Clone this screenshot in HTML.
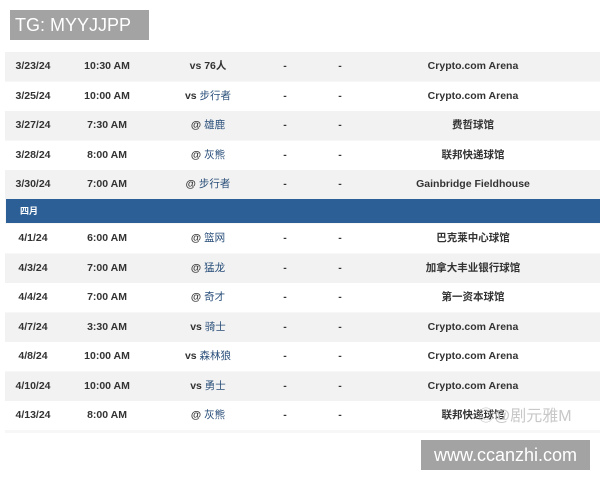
<!DOCTYPE html>
<html><head><meta charset="utf-8"><style>
body{margin:0;width:600px;height:480px;background:#fff;position:relative;overflow:hidden;font-family:"Liberation Sans","Noto Sans CJK SC",sans-serif;}
.tb{position:absolute;left:5px;top:52px;width:595px;height:381px;background:#f7f7f7;}
.wrap{position:absolute;left:0;top:1.5px;width:600px;height:480px}
.r{position:absolute;left:5px;width:595px;height:29.6px;font-size:10.5px;font-weight:bold;color:#333;}
.r span{position:absolute;top:0;line-height:29.6px;transform:translateX(-50%);white-space:nowrap}
.g{background:#f2f2f2}.w{background:#fff}
.o{color:#2a4f7a;font-weight:normal}
.mon{position:absolute;left:6px;top:197px;width:594px;height:24px;background:#2b5f96;color:#fff;font-size:9px;font-weight:bold;line-height:24px;padding-left:14px;box-sizing:border-box}
.lab{position:absolute;background:#a3a3a3;color:#fff;font-size:18px;}
</style></head><body>
<div class="lab" style="left:10px;top:10px;width:139px;height:30px;line-height:30px;padding-left:5px;box-sizing:border-box">TG: MYYJJPP</div>
<div class="tb"></div>
<div class="wrap">
<div class="r g" style="top:50px"><span style="left:28px">3/23/24</span><span style="left:102px">10:30 AM</span><span style="left:203px">vs 76人</span><span style="left:280px">-</span><span style="left:335px">-</span><span style="left:468px">Crypto.com Arena</span></div>
<div class="r w" style="top:80px"><span style="left:28px">3/25/24</span><span style="left:102px">10:00 AM</span><span style="left:203px">vs <b class="o">步行者</b></span><span style="left:280px">-</span><span style="left:335px">-</span><span style="left:468px">Crypto.com Arena</span></div>
<div class="r g" style="top:109px"><span style="left:28px">3/27/24</span><span style="left:102px">7:30 AM</span><span style="left:203px">@ <b class="o">雄鹿</b></span><span style="left:280px">-</span><span style="left:335px">-</span><span style="left:468px">费哲球馆</span></div>
<div class="r w" style="top:139px"><span style="left:28px">3/28/24</span><span style="left:102px">8:00 AM</span><span style="left:203px">@ <b class="o">灰熊</b></span><span style="left:280px">-</span><span style="left:335px">-</span><span style="left:468px">联邦快递球馆</span></div>
<div class="r g" style="top:168px"><span style="left:28px">3/30/24</span><span style="left:102px">7:00 AM</span><span style="left:203px">@ <b class="o">步行者</b></span><span style="left:280px">-</span><span style="left:335px">-</span><span style="left:468px">Gainbridge Fieldhouse</span></div>
<div class="mon">四月</div>
<div class="r w" style="top:222px"><span style="left:28px">4/1/24</span><span style="left:102px">6:00 AM</span><span style="left:203px">@ <b class="o">篮网</b></span><span style="left:280px">-</span><span style="left:335px">-</span><span style="left:468px">巴克莱中心球馆</span></div>
<div class="r g" style="top:252px"><span style="left:28px">4/3/24</span><span style="left:102px">7:00 AM</span><span style="left:203px">@ <b class="o">猛龙</b></span><span style="left:280px">-</span><span style="left:335px">-</span><span style="left:468px">加拿大丰业银行球馆</span></div>
<div class="r w" style="top:281px"><span style="left:28px">4/4/24</span><span style="left:102px">7:00 AM</span><span style="left:203px">@ <b class="o">奇才</b></span><span style="left:280px">-</span><span style="left:335px">-</span><span style="left:468px">第一资本球馆</span></div>
<div class="r g" style="top:311px"><span style="left:28px">4/7/24</span><span style="left:102px">3:30 AM</span><span style="left:203px">vs <b class="o">骑士</b></span><span style="left:280px">-</span><span style="left:335px">-</span><span style="left:468px">Crypto.com Arena</span></div>
<div class="r w" style="top:340px"><span style="left:28px">4/8/24</span><span style="left:102px">10:00 AM</span><span style="left:203px">vs <b class="o">森林狼</b></span><span style="left:280px">-</span><span style="left:335px">-</span><span style="left:468px">Crypto.com Arena</span></div>
<div class="r g" style="top:370px"><span style="left:28px">4/10/24</span><span style="left:102px">10:00 AM</span><span style="left:203px">vs <b class="o">勇士</b></span><span style="left:280px">-</span><span style="left:335px">-</span><span style="left:468px">Crypto.com Arena</span></div>
<div class="r w" style="top:399px"><span style="left:28px">4/13/24</span><span style="left:102px">8:00 AM</span><span style="left:203px">@ <b class="o">灰熊</b></span><span style="left:280px">-</span><span style="left:335px">-</span><span style="left:468px">联邦快递球馆</span></div>
</div>
<div style="position:absolute;left:478px;top:402px;font-size:16px;color:#c8c8c8;">◎@剧元雅M</div>
<div class="lab" style="left:421px;top:440px;width:169px;height:30px;line-height:30px;text-align:center">www.ccanzhi.com</div>
</body></html>
